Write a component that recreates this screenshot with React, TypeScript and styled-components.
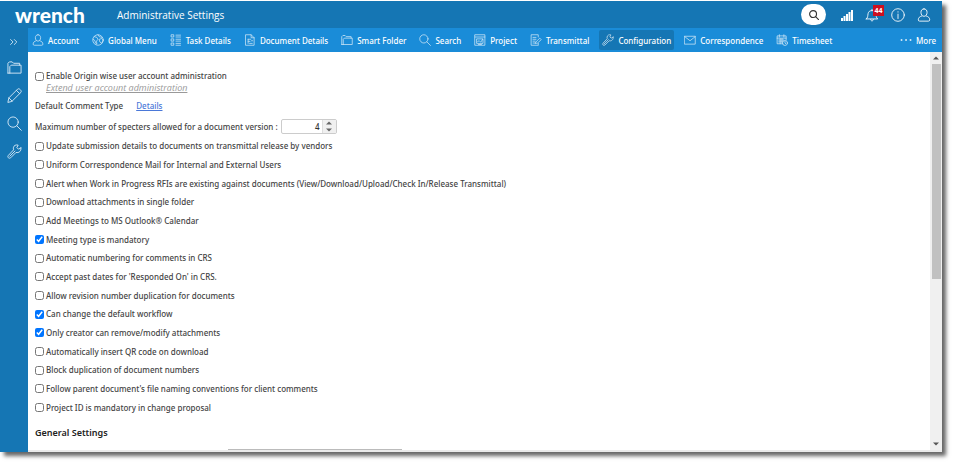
import React, { ReactNode } from "react";
import styled, { createGlobalStyle } from "styled-components";

const GlobalStyle = createGlobalStyle`
  *, *::before, *::after { box-sizing: border-box; }
  body { margin: 0; background: #fff; font-family: "Noto Sans", "Open Sans", sans-serif; font-size: 8px; font-weight: 500; color: #444; }
  button, input { font: inherit; }
`;

const Page = styled.div`
  height: 100vh;
  padding: 1px 12px 12px 0;
  overflow: hidden;
`;

const Shell = styled.div`
  height: 100%;
  display: flex;
  flex-direction: column;
  background: #fff;
  box-shadow: 4px 4px 4px rgba(0, 0, 0, 0.6);
  clip-path: inset(0 -12px -12px 0);
`;

const Header = styled.header`
  flex: none;
  height: 27px;
  display: flex;
  align-items: center;
  padding: 0 11px 0 15px;
  background: #1576b4;
  color: #fff;
`;

const Logo = styled.div`
  width: 102px;
  font-family: Lato, sans-serif;
  font-size: 21px;
  line-height: 24px;
  font-weight: 900;
`;

const Title = styled.h1`
  flex: 1;
  margin: 0;
  font-family: "Open Sans", sans-serif;
  font-size: 10px;
  line-height: 16px;
  font-weight: 500;
`;

const Tools = styled.div`
  display: flex;
  align-items: center;
  gap: 12px;
`;

const IconButton = styled.button`
  position: relative;
  display: flex;
  align-items: center;
  justify-content: center;
  padding: 0;
  border: 0;
  background: none;
  color: inherit;
`;

const RoundButton = styled(IconButton)`
  width: 25px;
  height: 21px;
  margin-right: 3px;
  border-radius: 11px;
  background: #fff;
  color: #333;
`;

const Badge = styled.span`
  position: absolute;
  top: -3px;
  right: -5px;
  width: 11px;
  height: 11px;
  background: #cc1020;
  font-size: 7px;
  line-height: 11px;
  font-weight: 700;
  text-align: center;
`;

const Body = styled.div`
  flex: 1;
  min-height: 0;
  display: flex;
`;

const Sidebar = styled.aside`
  flex: none;
  width: 28px;
  display: flex;
  flex-direction: column;
  align-items: center;
  gap: 13px;
  padding-top: 9px;
  background: #1576b4;
  color: #d5e8f5;
`;

const Main = styled.div`
  flex: 1;
  min-width: 0;
  display: flex;
  flex-direction: column;
`;

const Nav = styled.nav`
  flex: none;
  height: 24px;
  display: flex;
  align-items: center;
  gap: 7px;
  padding: 0 6px 0 1px;
  background: #1a8cd8;
  color: #fff;
`;

const NavLink = styled.a<{ $active?: boolean; $last?: boolean }>`
  display: flex;
  align-items: center;
  gap: 4px;
  height: 20px;
  padding: 0 ${(p) => (p.$last ? 0 : 3)}px;
  margin-left: ${(p) => (p.$last ? "auto" : 0)};
  border-radius: 2px;
  background: ${(p) => (p.$active ? "#1576b4" : "transparent")};
  color: #fff;
  text-decoration: none;
  white-space: nowrap;

  svg { opacity: 0.8; }
`;

const Viewport = styled.div`
  flex: 1;
  min-height: 0;
  display: flex;
  border-bottom: 2px solid #e9e9e9;
`;

const Content = styled.main`
  flex: 1;
  min-width: 0;
  overflow: hidden;
  padding: 17px 7px 0;
`;

const Check = styled.label`
  display: flex;
  align-items: center;
  gap: 2px;
  line-height: 14px;
  white-space: nowrap;
`;

const Box = styled.input`
  width: 9px;
  height: 9px;
  margin: 0;
  accent-color: #0075ff;
`;

const SubLink = styled.a`
  display: block;
  width: max-content;
  margin-left: 11px;
  font-family: "Open Sans", sans-serif;
  font-size: 9px;
  font-weight: 400;
  line-height: 10px;
  font-style: italic;
  color: #999;
`;

const Line = styled.div`
  display: flex;
  align-items: center;
  line-height: 14px;
  margin-top: 6px;
`;

const DetailsLink = styled.a`
  margin-left: 13px;
  color: #4a78d8;
`;

const Spinner = styled.div`
  display: flex;
  width: 56px;
  height: 15px;
  margin-left: 3px;
  border: 1px solid #ccc;
  border-radius: 2px;
`;

const NumberInput = styled.input`
  flex: 1;
  min-width: 0;
  padding: 0 2px;
  border: 0;
  background: none;
  color: #333;
  text-align: right;
`;

const Steps = styled.div`
  width: 14px;
  display: flex;
  flex-direction: column;
  background: #f0f0f0;
  border-left: 1px solid #ddd;
  color: #666;
`;

const Step = styled.button`
  flex: 1;
  display: flex;
  align-items: center;
  justify-content: center;
  padding: 0;
  border: 0;
  background: none;
  color: inherit;
`;

const Options = styled.div`
  height: 280px;
  margin-top: 3px;
  display: grid;
  grid-auto-rows: 1fr;
  align-items: center;
`;

const Heading = styled.h2`
  margin: 8px 0 0;
  font-size: 9px;
  line-height: 16px;
  font-weight: 600;
  color: #222;
`;

const FieldEdge = styled.div`
  width: 174px;
  height: 12px;
  margin: 8px 0 0 193px;
  border: 1px solid #bbb;
`;

const ScrollTrack = styled.div`
  flex: none;
  width: 12px;
  display: flex;
  flex-direction: column;
  align-items: center;
  background: #f0f0f0;
  color: #555;
`;

const ScrollThumb = styled.div`
  width: 9px;
  height: 54%;
  margin-bottom: auto;
  background: #c1c1c1;
`;

const ScrollArrow = styled(Step)`
  flex: none;
  height: 12px;
`;

const Svg = ({ size = 12, width = 1, children }: { size?: number; width?: number; children: ReactNode }) => (
  <svg width={size} height={size} viewBox="0 0 16 16" fill="none" stroke="currentColor" strokeWidth={width} strokeLinecap="round" strokeLinejoin="round" aria-hidden="true">
    {children}
  </svg>
);

const Arrow = ({ down }: { down?: boolean }) => (
  <svg width="6" height="4" viewBox="0 0 6 4" fill="currentColor" aria-hidden="true">
    <path d={down ? "M0 .5h6L3 3.5z" : "M0 3.5h6L3 .5z"} />
  </svg>
);

const shapes: Record<string, ReactNode> = {
  user: <><path d="M8 1C5.800 1 4.500 2.700 4.500 5S5.800 9.500 8 9.500 11.500 7.300 11.500 5 10.200 1 8 1z" /><path d="M5.500 9C3 10 1.500 11 1.500 13.500c0 1 .5 1.500 1.500 1.500h10c1 0 1.500-.5 1.500-1.500 0-2.500-1.500-3.500-4-4.500" /></>,
  globe: <><circle cx="8" cy="8" r="7" /><path d="M3 3.500l3.500 1L8 7 6 9.500l.5 4L4.500 12 4 9 1.500 7M8 1l1.500 2.500 4 1M10 7l3-1 2 2-2 4.500-2-1.500z" /></>,
  tasks: <><path d="M2 1h3v3H2zM2 6.500h3v3H2zM2 12h3v3H2zM8 1.500h6M8 4h6M8 7h6M8 9.500h6M8 12.500h6M8 15h6" /></>,
  document: <><path d="M2.500 1h7l4 4v10h-11zM9.500 1v4h4M5.500 7v5.500M5.500 7H9M5.500 9.800H8M7.500 12.500h3.500M10 9h1.500" /></>,
  folder: <><path d="M1 14V3.500L2.500 2h3L7 3.500h6.500V5.500M1 14h14V5.500H4.500L3 7v7" /></>,
  search: <><circle cx="6.500" cy="6.500" r="5.500" /><path d="M10.500 10.500L15.300 15.300" /></>,
  project: <><path d="M1.500 1h13v14h-13zM1.500 4h13M4 6.500h8v6H4zM5 10l2-1 2 2 2.500-4M6 14h4" /></>,
  transmittal: <><path d="M10 15H1.500V1H11v3M4 4.500h4M4 7h4M4 9.500h3M4 12h3M11 15v-2.500M8 10.500l5-5 2 2-5 4.500-2.500.5z" /></>,
  wrench: <><path d="M14.800 4.200l-2.600 1.300-1.700-1.700 1.400-2.600C9.500.500 7.200 1.500 6.800 4c-.1.900 0 1.600.2 2.200l-5.600 6c-1.500 1.700.800 4 2.500 2.500l5.700-5.700c3 .9 6-1.600 5.200-4.800zM8.500 7.500L3 13" /></>,
  mail: <><path d="M1 3h14v10.500H1zM1 3.500l7 5.500 7-5.500" /></>,
  timesheet: <><path d="M9 13H1.500V2.500h12V8M1.500 5.500h12M4.500 1v3M10.500 1v3M3.500 8h7M3.500 10.500h5M5.500 6v7M8 6v5" /><circle cx="12" cy="12" r="3.300" /><path d="M12 10v2l1 1" /></>,
  pencil: <><path d="M1 15l1-4.500L11.500 1c1.500-1 4.500 2 3.500 3.500L5.500 14zM2 10.500L5.500 14M10 2.500L13.500 6" /></>,
  bell: <><path d="M1.500 12.500h13C12.500 11 13 9 12.500 6.500 12 4 10.500 3 8 3S4 4 3.500 6.500C3 9 3.500 11 1.500 12.500zM6.500 13c0 2.500 3 2.500 3 0M8 3V1.500" /></>,
  info: <><circle cx="8" cy="8" r="7.200" /><path d="M8 7v5M8 4.300v.4" /></>,
  chevrons: <><path d="M2.500 4l4 4-4 4M8.500 4l4 4-4 4" /></>,
};

const navItems: [string, string][] = [
  ["user", "Account"],
  ["globe", "Global Menu"],
  ["tasks", "Task Details"],
  ["document", "Document Details"],
  ["folder", "Smart Folder"],
  ["search", "Search"],
  ["project", "Project"],
  ["transmittal", "Transmittal"],
  ["wrench", "Configuration"],
  ["mail", "Correspondence"],
  ["timesheet", "Timesheet"],
];

const options: [string, boolean][] = [
  ["Update submission details to documents on transmittal release by vendors", false],
  ["Uniform Correspondence Mail for Internal and External Users", false],
  ["Alert when Work in Progress RFIs are existing against documents (View/Download/Upload/Check In/Release Transmittal)", false],
  ["Download attachments in single folder", false],
  ["Add Meetings to MS Outlook® Calendar", false],
  ["Meeting type is mandatory", true],
  ["Automatic numbering for comments in CRS", false],
  ["Accept past dates for 'Responded On' in CRS.", false],
  ["Allow revision number duplication for documents", false],
  ["Can change the default workflow", true],
  ["Only creator can remove/modify attachments", true],
  ["Automatically insert QR code on download", false],
  ["Block duplication of document numbers", false],
  ["Follow parent document's file naming conventions for client comments", false],
  ["Project ID is mandatory in change proposal", false],
];

export default function App() {
  return (
    <>
      <GlobalStyle />
      <Page>
        <Shell>
          <Header>
            <Logo>wrench</Logo>
            <Title>Administrative Settings</Title>
            <Tools>
              <RoundButton aria-label="Search"><Svg size={10} width={1.800}>{shapes.search}</Svg></RoundButton>
              <IconButton aria-label="Signal">
                <svg width="12" height="12" viewBox="0 0 12 12" fill="currentColor" aria-hidden="true">
                  <path d="M0 9h2v3H0zM2.500 7h2v5h-2zM5 5h2v7H5zM7.500 3h2v9h-2zM10 1h2v11h-2z" />
                </svg>
              </IconButton>
              <IconButton aria-label="Notifications"><Svg size={14}>{shapes.bell}</Svg><Badge>44</Badge></IconButton>
              <IconButton aria-label="Information"><Svg size={14}>{shapes.info}</Svg></IconButton>
              <IconButton aria-label="Profile"><Svg size={14}>{shapes.user}</Svg></IconButton>
            </Tools>
          </Header>
          <Body>
            <Sidebar>
              <IconButton aria-label="Expand"><Svg size={10} width={1.400}>{shapes.chevrons}</Svg></IconButton>
              <IconButton aria-label="Folders"><Svg size={15}>{shapes.folder}</Svg></IconButton>
              <IconButton aria-label="Edit"><Svg size={15}>{shapes.pencil}</Svg></IconButton>
              <IconButton aria-label="Find"><Svg size={15}>{shapes.search}</Svg></IconButton>
              <IconButton aria-label="Settings"><Svg size={15}>{shapes.wrench}</Svg></IconButton>
            </Sidebar>
            <Main>
              <Nav>
                {navItems.map(([icon, label]) => (
                  <NavLink key={label} href="#" $active={label === "Configuration"}>
                    <Svg>{shapes[icon]}</Svg>{label}
                  </NavLink>
                ))}
                <NavLink href="#" $last>
                  <Svg><path d="M2 8h.1M8 8h.1M14 8h.1" strokeWidth="2.500" /></Svg>More
                </NavLink>
              </Nav>
              <Viewport>
                <Content>
                  <Check><Box type="checkbox" />Enable Origin wise user account administration</Check>
                  <SubLink href="#">Extend user account administration</SubLink>
                  <Line>Default Comment Type<DetailsLink href="#">Details</DetailsLink></Line>
                  <Line>
                    <label htmlFor="specters">Maximum number of specters allowed for a document version :</label>
                    <Spinner>
                      <NumberInput id="specters" defaultValue="4" />
                      <Steps>
                        <Step aria-label="Increase"><Arrow /></Step>
                        <Step aria-label="Decrease"><Arrow down /></Step>
                      </Steps>
                    </Spinner>
                  </Line>
                  <Options>
                    {options.map(([label, on]) => (
                      <Check key={label}><Box type="checkbox" defaultChecked={on} />{label}</Check>
                    ))}
                  </Options>
                  <Heading>General Settings</Heading>
                  <FieldEdge />
                </Content>
                <ScrollTrack>
                  <ScrollArrow aria-label="Scroll up"><Arrow /></ScrollArrow>
                  <ScrollThumb />
                  <ScrollArrow aria-label="Scroll down"><Arrow down /></ScrollArrow>
                </ScrollTrack>
              </Viewport>
            </Main>
          </Body>
        </Shell>
      </Page>
    </>
  );
}
